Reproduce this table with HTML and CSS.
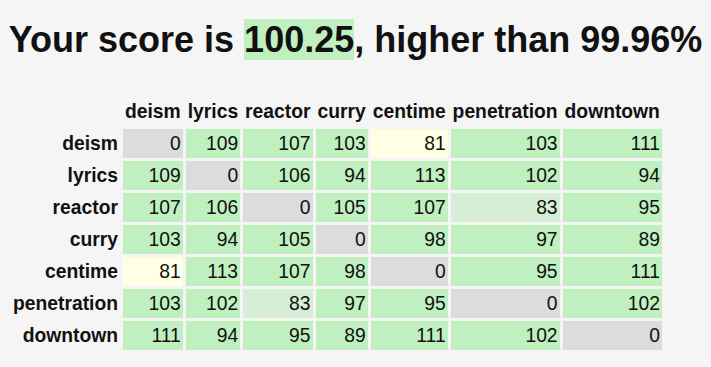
FILE: index.html
```html
<!DOCTYPE html>
<html lang="en">
<head>
<meta charset="utf-8">
<title>Score</title>
<link rel="stylesheet" href="styles.css">
</head>
<body>
<h1 class="title">Your score is <span class="hl">100.25</span>, higher than 99.96%</h1>
<table class="matrix">
<thead>
<tr><th></th><th>deism</th><th>lyrics</th><th>reactor</th><th>curry</th><th>centime</th><th>penetration</th><th>downtown</th></tr>
</thead>
<tbody>
<tr><th class="rl">deism</th><td class="z">0</td><td class="g">109</td><td class="g">107</td><td class="g">103</td><td class="y">81</td><td class="g">103</td><td class="g">111</td></tr>
<tr><th class="rl">lyrics</th><td class="g">109</td><td class="z">0</td><td class="g">106</td><td class="g">94</td><td class="g">113</td><td class="g">102</td><td class="g">94</td></tr>
<tr><th class="rl">reactor</th><td class="g">107</td><td class="g">106</td><td class="z">0</td><td class="g">105</td><td class="g">107</td><td class="p">83</td><td class="g">95</td></tr>
<tr><th class="rl">curry</th><td class="g">103</td><td class="g">94</td><td class="g">105</td><td class="z">0</td><td class="g">98</td><td class="g">97</td><td class="g">89</td></tr>
<tr><th class="rl">centime</th><td class="y">81</td><td class="g">113</td><td class="g">107</td><td class="g">98</td><td class="z">0</td><td class="g">95</td><td class="g">111</td></tr>
<tr><th class="rl">penetration</th><td class="g">103</td><td class="g">102</td><td class="p">83</td><td class="g">97</td><td class="g">95</td><td class="z">0</td><td class="g">102</td></tr>
<tr><th class="rl">downtown</th><td class="g">111</td><td class="g">94</td><td class="g">95</td><td class="g">89</td><td class="g">111</td><td class="g">102</td><td class="z">0</td></tr>
</tbody>
</table>
</body>
</html>
```
FILE: styles.css
```css
html, body {
  background: #f5f5f5;
}
body {
  margin: 8px;
  font-family: "Liberation Sans", Arial, sans-serif;
  color: #111;
}
.title {
  font-size: 36px;
  font-weight: bold;
  text-align: center;
  margin: 11px 0 33px;
  line-height: normal;
}
.hl {
  background: #c0efc0;
}
.matrix {
  border-collapse: separate;
  border-spacing: 3px;
  font-size: 19.3px;
}
.matrix th, .matrix td {
  padding: 0 2px;
  line-height: 29px;
  height: 29px;
  white-space: nowrap;
}
.matrix th {
  font-weight: bold;
}
.matrix .rl {
  text-align: right;
}
.matrix td {
  text-align: right;
}
.g { background: #c0efc0; }
.z { background: #dcdcdc; }
.y { background: #ffffe6; }
.p { background: #d6eed6; }
```
